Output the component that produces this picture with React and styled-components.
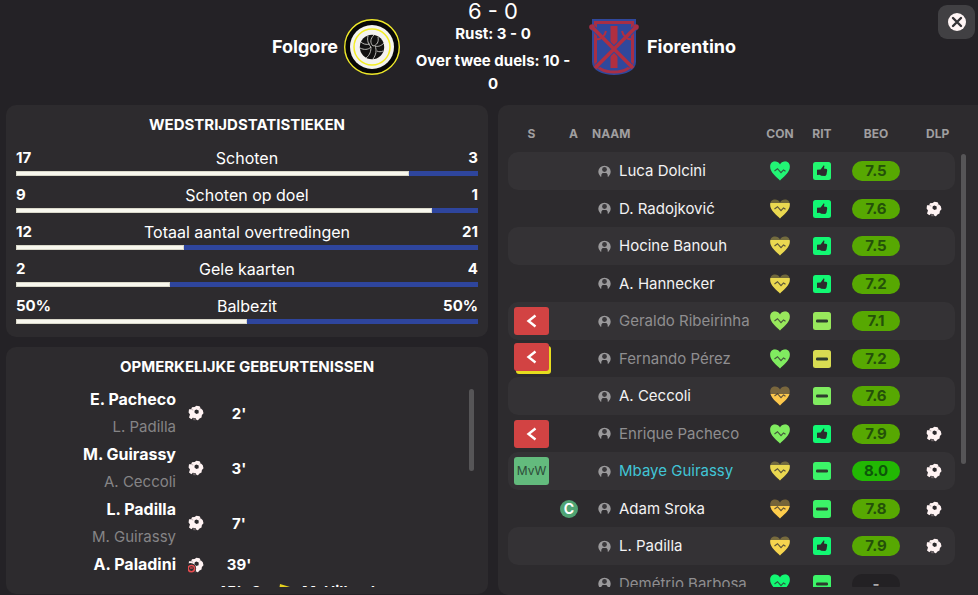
import React from "react";
import styled, { createGlobalStyle, css } from "styled-components";

const GlobalStyle = createGlobalStyle`
  * { box-sizing: border-box; }
  body {
    margin: 0;
    background: #242226;
    color: #fff;
    font-family: Inter, "Liberation Sans", sans-serif;
    font-size: 15px;
    line-height: 20px;
  }
`;

const Page = styled.div`
  display: flex;
  flex-direction: column;
  height: 100vh;
  overflow: hidden;
`;

/* ---------- header ---------- */

const Header = styled.header`
  display: grid;
  grid-template-columns: 1fr 166px 1fr;
  column-gap: 10px;
  flex: none;
  min-height: 105px;
  padding-left: 8px;
`;

const Team = styled.div`
  display: flex;
  align-items: center;
  justify-content: ${(p) => (p.$home ? "flex-end" : "flex-start")};
  gap: ${(p) => (p.$home ? 6 : 8)}px;
  height: 94px;
  padding-left: 3px;
`;

const TeamName = styled.h2`
  margin: 0;
  font-size: 18px;
  line-height: 24px;
  font-weight: 700;
`;

const Result = styled.div`
  text-align: center;
`;

const Score = styled.h1`
  margin: 0;
  font-size: 22px;
  line-height: 22px;
  font-weight: 400;
`;

const ScoreNote = styled.p`
  margin: 0 0 4px;
  line-height: 23px;
  font-weight: 700;
`;

const CloseButton = styled.button`
  display: flex;
  align-items: center;
  justify-content: center;
  align-self: flex-start;
  width: 37px;
  height: 34px;
  margin: 5px 3px 0 auto;
  padding: 0;
  border: 0;
  border-radius: 9px;
  background: #414043;
  cursor: pointer;
`;

/* ---------- panels ---------- */

const Main = styled.main`
  display: grid;
  grid-template-columns: 482fr 480fr;
  column-gap: 10px;
  flex: 1;
  min-height: 0;
  padding-left: 6px;
`;

const Column = styled.div`
  display: flex;
  flex-direction: column;
  gap: 10px;
  min-height: 0;
`;

const Panel = styled.section`
  display: flex;
  flex-direction: column;
  padding: 10px 10px 13px;
  border-radius: 10px;
  background: #2d2b2e;
`;

const EventsPanel = styled(Panel)`
  flex: 1;
  min-height: 0;
  padding-bottom: 7px;
  margin-bottom: 1px;
`;

const SquadPanel = styled(Panel)`
  min-height: 0;
  padding-bottom: 8px;
  border-radius: 10px 0 0 10px;
`;

const PanelTitle = styled.h3`
  margin: 0;
  text-align: center;
  text-transform: uppercase;
  font-size: 15px;
  line-height: 20px;
  font-weight: 700;
`;

const ScrollArea = styled.div`
  display: flex;
  flex: 1;
  min-height: 0;
`;

const ScrollContent = styled.div`
  flex: 1;
  min-width: 0;
  overflow-y: auto;
  scrollbar-width: none;
`;

const ScrollThumb = styled.div`
  flex: none;
  width: 5px;
  height: ${(p) => p.$length}px;
  margin: ${(p) => p.$margin};
  border-radius: 3px;
  background: #565557;
`;

/* ---------- statistics ---------- */

const StatList = styled.div`
  display: grid;
  gap: 9px;
  margin-top: 13px;
`;

const StatHead = styled.div`
  display: grid;
  grid-template-columns: 60px 1fr 60px;
  text-align: center;
  margin-bottom: 3px;
`;

const StatLabel = styled.span`
  font-size: 16px;
`;

const StatValue = styled.strong`
  text-align: ${(p) => (p.$away ? "right" : "left")};
`;

const Bar = styled.div`
  height: 5px;
  background: #2e459d;
`;

const BarFill = styled.div`
  height: 5px;
  background: #f8f7ee;
  border: 1px solid #d9d8ca;
`;

/* ---------- events ---------- */

const EventList = styled.ol`
  margin: 9px 0 0;
  padding: 0;
  list-style: none;
`;

const EventRow = styled.li`
  display: grid;
  grid-template-columns: 1fr 40px 46px 40px 1fr;
  align-items: center;
  margin-bottom: ${(p) => (p.$tall ? 1 : 0)}px;
  line-height: 27px;
`;

const EventNames = styled.div`
  text-align: ${(p) => (p.$away ? "left" : "right")};
  font-size: ${(p) => (p.$away ? 15 : 16)}px;
  font-weight: 700;
`;

const Assist = styled.div`
  color: #858486;
  font-size: 15px;
  font-weight: 400;
`;

const EventCell = styled.div`
  display: flex;
  align-items: center;
  justify-content: center;
`;

const EventTime = styled.time`
  text-align: center;
  font-weight: 700;
  white-space: nowrap;
`;

/* ---------- squad table ---------- */

const Table = styled.table`
  width: 100%;
  table-layout: fixed;
  border-spacing: 0;
`;

const Col = styled.col`
  width: ${(p) => (p.$width ? p.$width + "px" : "auto")};
`;

const HeadCell = styled.th`
  position: sticky;
  top: 0;
  z-index: 1;
  height: 37px;
  padding: ${(p) => p.$pad || "0"};
  background: #2d2b2e;
  color: #a09fa0;
  font-size: 12px;
  line-height: 16px;
  font-weight: 700;
  text-align: ${(p) => p.$align || "center"};
`;

const Cell = styled.td`
  height: 37px;
  padding: ${(p) => p.$pad || "0"};
  text-align: ${(p) => p.$align || "center"};
  > svg { display: block; margin: ${(p) => (p.$align ? "0" : "0 auto")}; }
`;

const Row = styled.tr`
  &:nth-child(odd) td { height: 38px; background: #343235; }
  td:first-child { border-radius: 10px 0 0 10px; }
  td:last-child { border-radius: 0 10px 10px 0; }
`;

const nameTones = { normal: "#f3f2f3", dim: "#8f8e90", active: "#41c5d6" };

const Player = styled.div`
  display: flex;
  align-items: center;
  gap: 8px;
  color: ${(p) => nameTones[p.$tone]};
  white-space: nowrap;
`;

const badgeTones = {
  off: css`background: #d24343; color: #fff;`,
  booked: css`background: #d24343; color: #fff; margin-bottom: 3px; box-shadow: 2px 3px 0 #e6dc1e;`,
  mvp: css`background: #63bb7d; color: #2c4a38;`,
};

const StatusBadge = styled.span`
  display: flex;
  align-items: center;
  justify-content: center;
  width: 35px;
  height: 28px;
  margin: 0 auto;
  border-radius: 3px;
  font-size: 12px;
  ${(p) => badgeTones[p.$kind]}
`;

const CaptainBadge = styled.span`
  display: block;
  width: 18px;
  margin-left: auto;
  border-radius: 50%;
  background: #4fa373;
  font-size: 14px;
  line-height: 18px;
  font-weight: 700;
  text-align: center;
`;

const pillTones = {
  good: css`background: #57a802; color: #24500a;`,
  top: css`background: #22b803; color: #0d560a;`,
  none: css`background: #232124; color: #a9a8aa;`,
};

const Rating = styled.span`
  display: block;
  width: 48px;
  margin: 0 auto;
  border-radius: 10px;
  line-height: 20px;
  font-weight: 700;
  ${(p) => pillTones[p.$tone]}
`;

/* ---------- drawings ---------- */

const Ball = ({ disallowed }) => (
  <svg width="16" height="16" viewBox="0 0 16 16" aria-label="Doelpunt">
    <path
      fill="#fff3f3"
      d="M4 2.2 6.6 1.9 8.4.7 11.6 1.2 12.5 3.1 14.8 5.2 15.5 8.2 13.9 9.9 13.5 12.6 11.5 13.4 10 15.3 8.6 15.1 7.6 13.2 4.8 12.8 3.4 14.2 1 12.4 2 9.5.6 7.4 1 4.2 3.2 4.2Z"
    />
    <path fill="#2b292c" d="m8.4 4.400 2.300 1.200-.1 2.600-2.400.8-1.800-1.700.4-2.100Z" />
    <path fill="#6d6467" d="M4.300 13.300 7.200 13.200 7.900 15.200 5.500 15.200Z" />
    <path fill="none" stroke="#8d7f82" strokeWidth=".6" d="m3.500 4.500 1.800.5M11.500 4 13 3.300" />
    {disallowed && (
      <g>
        <circle cx="2.500" cy="11.500" r="5.600" fill="#2d2b2e" />
        <circle cx="3.400" cy="11.600" r="3.200" fill="none" stroke="#e84b4e" strokeWidth="1.500" />
        <path d="M2 11h2.800" stroke="#e84b4e" strokeWidth="1.200" />
      </g>
    )}
  </svg>
);

const heartShape = "M10 19.500C7.500 16.500.2 12 .2 5.800.2 2.500 2.300.6 5 .6 7.300.6 9 1.800 10 3.500 11 1.800 12.700.6 15 .6 17.700.6 19.800 2.500 19.800 5.800 19.800 12 12.500 16.500 10 19.500Z";

const Heart = ({ color, drained }) => (
  <svg width="20" height="20" viewBox="0 0 20 20" aria-label="Conditie">
    <path d={heartShape} fill={color} opacity=".35" />
    <svg y={drained} width="20" height={20 - drained} viewBox={`0 ${drained} 20 ${20 - drained}`}>
      <path d={heartShape} fill={color} />
    </svg>
    <path
      d="m4.500 10 3-2.300 3.500 4 2.500-2.700 2 1.300"
      fill="none"
      stroke="#343235"
      strokeOpacity=".8"
      strokeWidth="1.100"
    />
  </svg>
);

const Form = ({ kind, color }) => (
  <svg width="18" height="18" viewBox="0 0 18 18" aria-label="Ritme">
    <rect width="18" height="18" rx="2.500" fill={color} />
    {kind === "up" ? (
      <path
        fill="#2d2b2e"
        d="M4 7.800 7.600 7.600 9.300 5.300 10.800 3.200 11.500 3.900 10.900 6.500 13.800 6.900 14.200 8.300 13.500 12.500 12.300 14 8.300 13.700 6.500 12.800 4 13Z"
      />
    ) : (
      <rect x="3" y="7.500" width="12" height="3" rx="1.200" fill="#2d3b2e" />
    )}
  </svg>
);

const PersonIcon = () => (
  <svg width="13" height="13" viewBox="0 0 13 13" aria-hidden="true">
    <path d="M2.400 11.500A6.200 6.200 0 1 1 10.600 11.500L9.800 12 9.600 9.400 8.400 8H4.600L3.400 9.400 3.200 12Z" fill="#9b9a9c" />
    <circle cx="6.500" cy="4.500" r="2.400" fill="#3a383b" />
  </svg>
);

const BackIcon = () => (
  <svg width="12" height="14" viewBox="0 0 12 14" aria-label="Gewisseld">
    <path d="M9.500 1.500 2.500 7l7 5.500" fill="none" stroke="#fff" strokeWidth="2.400" />
  </svg>
);

const CloseIcon = () => (
  <svg width="18" height="18" viewBox="0 0 18 18" aria-hidden="true">
    <circle cx="9" cy="9" r="9" fill="#fff5f5" />
    <path d="m5 5 8 8m0-8-8 8" stroke="#343235" strokeWidth="2.400" strokeLinecap="round" />
  </svg>
);

const CardIcon = () => (
  <svg width="16" height="16" viewBox="0 0 16 16" aria-label="Gele kaart">
    <path d="M6 0 16 3 13 16 4 13Z" fill="#e6d21e" />
  </svg>
);

const FolgoreCrest = () => (
  <svg width="56" height="56" viewBox="0 0 56 56" aria-hidden="true">
    <circle cx="28" cy="28" r="27.300" fill="#070707" stroke="#eee82a" strokeWidth="1.400" />
    <circle cx="28" cy="28" r="22" fill="#f4f3ef" />
    <circle cx="28" cy="28" r="18" fill="none" stroke="#f4ee25" strokeWidth="1.500" />
    <circle cx="28" cy="28" r="12.200" fill="#111" />
    <g fill="none" stroke="#c9c9c5" strokeWidth=".9">
      <path d="M29 27c-3-3-3-7 1-11M29 27c4-1 6-4 5-9M24 17c-1 4 0 8 3 11-3 3-7 3-11 1M27 28c0 4-1 8-5 11M31 27c2 4 1 9-2 13M31 27c3 1 6 0 9-3M33 32c2 1 4 1 6 0M17 23c2 2 5 3 9 2" />
    </g>
  </svg>
);

const FiorentinoCrest = () => (
  <svg width="50" height="56" viewBox="0 0 50 56" aria-hidden="true">
    <path d="M3 0h44v43c0 8-10 13-22 13S3 51 3 43Z" fill="#30489c" />
    <path d="M6.500 3.500h37v39c0 6-8 10.500-18.500 10.500S6.500 48.500 6.500 42.500Z" fill="none" stroke="#a82f45" strokeWidth="3" />
    <path d="M21.500 7h7v42h-7Z" fill="#b02f41" />
    <path d="M3 8 42 47M47 8 8 47" stroke="#30489c" strokeWidth="5.500" />
    <g fill="none" stroke="#b02f41">
      <path d="M3 8 44 49M47 8 6 49" strokeWidth="3.600" />
      <path d="M8 20c3 1 8-3 9-8M42 20c-3 1-8-3-9-8" strokeWidth="2" />
    </g>
    <circle cx="3" cy="8" r="2.800" fill="#a82f45" />
    <circle cx="47" cy="8" r="2.800" fill="#a82f45" />
  </svg>
);

/* ---------- data ---------- */

const stats = [
  { label: "Schoten", home: "17", away: "3", share: 85 },
  { label: "Schoten op doel", home: "9", away: "1", share: 90 },
  { label: "Totaal aantal overtredingen", home: "12", away: "21", share: 36.4 },
  { label: "Gele kaarten", home: "2", away: "4", share: 33.3 },
  { label: "Balbezit", home: "50%", away: "50%", share: 50 },
];

const events = [
  { time: "2'", scorer: "E. Pacheco", assist: "L. Padilla" },
  { time: "3'", scorer: "M. Guirassy", assist: "A. Ceccoli" },
  { time: "7'", scorer: "L. Padilla", assist: "M. Guirassy" },
  { time: "39'", scorer: "A. Paladini", disallowed: true },
  { time: "45'+3", booked: "M. Hilland" },
];

const GREEN = "#12f873";
const YELLOW = "#ead850";

const players = [
  { name: "Luca Dolcini", heart: ["#22f575", 0], form: ["up", "#22f870"], rating: "7.5" },
  { name: "D. Radojković", heart: [YELLOW, 4], form: ["up", GREEN], rating: "7.6", goal: true },
  { name: "Hocine Banouh", heart: [YELLOW, 4], form: ["up", GREEN], rating: "7.5" },
  { name: "A. Hannecker", heart: [YELLOW, 4], form: ["up", GREEN], rating: "7.2" },
  { name: "Geraldo Ribeirinha", tone: "dim", status: "off", heart: ["#98e85c", 0], form: ["flat", "#98e85c"], rating: "7.1" },
  { name: "Fernando Pérez", tone: "dim", status: "booked", heart: ["#80ec60", 0], form: ["flat", "#d8dc52"], rating: "7.2" },
  { name: "A. Ceccoli", heart: ["#fdc84c", 8], form: ["flat", "#80ec60"], rating: "7.6" },
  { name: "Enrique Pacheco", tone: "dim", status: "off", heart: ["#80ec60", 0], form: ["up", GREEN], rating: "7.9", goal: true },
  { name: "Mbaye Guirassy", tone: "active", status: "mvp", heart: [YELLOW, 4], form: ["flat", "#3cf468"], rating: "8.0", top: true, goal: true },
  { name: "Adam Sroka", captain: true, heart: ["#fdcc4c", 7], form: ["flat", "#3cf468"], rating: "7.8", goal: true },
  { name: "L. Padilla", heart: ["#f6d44e", 4], form: ["up", GREEN], rating: "7.9", goal: true },
  { name: "Demétrio Barbosa", tone: "dim", heart: [GREEN, 0], form: ["flat", "#3cf468"], rating: null },
];

const ratingTone = (p) => (p.rating === null ? "none" : p.top ? "top" : "good");

function MatchHeader() {
  return (
    <Header>
      <Team $home>
        <TeamName>Folgore</TeamName>
        <FolgoreCrest />
      </Team>
      <Result>
        <Score>6 - 0</Score>
        <ScoreNote>Rust: 3 - 0</ScoreNote>
        <ScoreNote>Over twee duels: 10 - 0</ScoreNote>
      </Result>
      <Team>
        <FiorentinoCrest />
        <TeamName>Fiorentino</TeamName>
        <CloseButton type="button" aria-label="Sluiten">
          <CloseIcon />
        </CloseButton>
      </Team>
    </Header>
  );
}

function Statistics() {
  return (
    <Panel>
      <PanelTitle>Wedstrijdstatistieken</PanelTitle>
      <StatList>
        {stats.map((s) => (
          <div key={s.label}>
            <StatHead>
              <StatValue>{s.home}</StatValue>
              <StatLabel>{s.label}</StatLabel>
              <StatValue $away>{s.away}</StatValue>
            </StatHead>
            <Bar>
              <BarFill style={{ width: `${s.share}%` }} />
            </Bar>
          </div>
        ))}
      </StatList>
    </Panel>
  );
}

function Events() {
  return (
    <EventsPanel>
      <PanelTitle>Opmerkelijke gebeurtenissen</PanelTitle>
      <ScrollArea>
        <ScrollContent>
          <EventList>
            {events.map((e) => (
              <EventRow key={e.time} $tall={Boolean(e.assist)}>
                <EventNames>
                  {e.scorer}
                  {e.assist && <Assist>{e.assist}</Assist>}
                </EventNames>
                <EventCell>{e.scorer && <Ball disallowed={e.disallowed} />}</EventCell>
                <EventTime>{e.time}</EventTime>
                <EventCell>{e.booked && <CardIcon />}</EventCell>
                <EventNames $away>{e.booked}</EventNames>
              </EventRow>
            ))}
          </EventList>
        </ScrollContent>
        <ScrollThumb $length={82} $margin="12px 4px 0 7px" />
      </ScrollArea>
    </EventsPanel>
  );
}

function Squad() {
  return (
    <SquadPanel>
      <ScrollArea>
        <ScrollContent>
          <Table>
            <colgroup>
              <Col $width={47} />
              <Col $width={35} />
              <Col />
              <Col $width={42} />
              <Col $width={42} />
              <Col $width={66} />
              <Col $width={46} />
            </colgroup>
            <thead>
              <tr>
                <HeadCell>S</HeadCell>
                <HeadCell $align="right" $pad="0 12px 0 0">A</HeadCell>
                <HeadCell $align="left" $pad="0 0 0 2px">NAAM</HeadCell>
                <HeadCell>CON</HeadCell>
                <HeadCell>RIT</HeadCell>
                <HeadCell>BEO</HeadCell>
                <HeadCell $align="left" $pad="0 0 0 17px">DLP</HeadCell>
              </tr>
            </thead>
            <tbody>
              {players.map((p) => (
                <Row key={p.name}>
                  <Cell>
                    {p.status && (
                      <StatusBadge $kind={p.status}>
                        {p.status === "mvp" ? "MvW" : <BackIcon />}
                      </StatusBadge>
                    )}
                  </Cell>
                  <Cell $align="right" $pad="0 12px 0 0">
                    {p.captain && <CaptainBadge>C</CaptainBadge>}
                  </Cell>
                  <Cell $align="left" $pad="0 0 0 8px">
                    <Player $tone={p.tone || "normal"}>
                      <PersonIcon />
                      {p.name}
                    </Player>
                  </Cell>
                  <Cell>
                    <Heart color={p.heart[0]} drained={p.heart[1]} />
                  </Cell>
                  <Cell>
                    <Form kind={p.form[0]} color={p.form[1]} />
                  </Cell>
                  <Cell>
                    <Rating $tone={ratingTone(p)}>{p.rating || "-"}</Rating>
                  </Cell>
                  <Cell $align="left" $pad="0 0 0 17px">
                    {p.goal && <Ball />}
                  </Cell>
                </Row>
              ))}
            </tbody>
          </Table>
        </ScrollContent>
        <ScrollThumb $length={310} $margin="39px 2px 0 6px" />
      </ScrollArea>
    </SquadPanel>
  );
}

export default function App() {
  return (
    <Page>
      <GlobalStyle />
      <MatchHeader />
      <Main>
        <Column>
          <Statistics />
          <Events />
        </Column>
        <Squad />
      </Main>
    </Page>
  );
}
